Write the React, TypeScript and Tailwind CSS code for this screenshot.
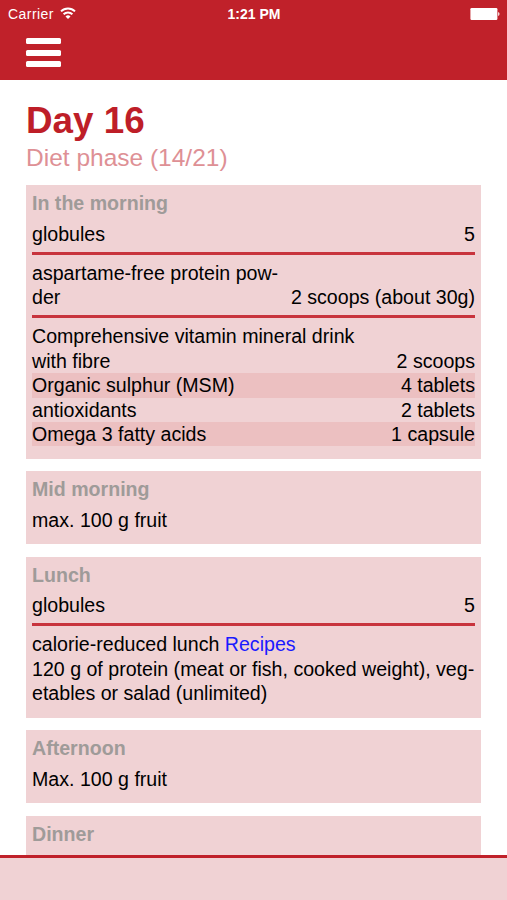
import type { ReactNode } from "react";

function Row({ name, amount, striped }: { name: string; amount: string; striped?: boolean }) {
  return (
    <div className={striped ? "flex justify-between bg-[#ecc0c1]" : "flex justify-between"}>
      <span>{name}</span>
      <span>{amount}</span>
    </div>
  );
}

function Divider() {
  return <div className="mt-[5.8px] mb-[6px] h-[3px] bg-[#c8343d]" />;
}

function Meal({ title, children }: { title: string; children?: ReactNode }) {
  return (
    <section className="bg-[#f0d2d4] px-[6px] pt-[6px] pb-[12.2px]">
      <h2 className="mb-[6.2px] font-bold text-[#9f9b99]">{title}</h2>
      {children}
    </section>
  );
}

function StatusBar() {
  return (
    <div className="grid h-7 grid-cols-3 items-center pr-[7px] pl-2 text-[14px] leading-7">
      <div className="flex items-center gap-[6.5px]">
        <span className="tracking-[0.45px]">Carrier</span>
        <svg className="-mt-[3px]" width="16" height="12" viewBox="0 0 16 12" fill="none" stroke="currentColor" strokeWidth="2">
          <path d="M1 4.4a10 10 0 0 1 14 0M3.6 7.2a6.3 6.3 0 0 1 8.8 0" />
          <path d="M8 12 5.5 9.4a3.6 3.6 0 0 1 5 0Z" fill="currentColor" stroke="none" />
        </svg>
      </div>
      <span className="text-center font-bold">1:21 PM</span>
      <svg className="-mt-[1px] justify-self-end" width="30" height="12" viewBox="0 0 30 12" fill="currentColor">
        <rect x="0.4" width="27" height="12" rx="1.2" />
        <path d="M28.2 4a2.2 2.2 0 0 1 0 4Z" />
      </svg>
    </div>
  );
}

export default function App() {
  return (
    <div className="flex h-[900px] flex-col overflow-hidden bg-white font-['Liberation_Sans',Arial,sans-serif] text-[19.6px] leading-[24.4px] text-black">
      <header className="h-20 shrink-0 bg-[#c0212a] text-white">
        <StatusBar />
        <button aria-label="Menu" className="mt-[10px] ml-[26px] flex w-[35px] flex-col gap-[5.6px]">
          <span className="h-[6px] w-full rounded-[1.5px] bg-white" />
          <span className="h-[6px] w-full rounded-[1.5px] bg-white" />
          <span className="h-[6px] w-full rounded-[1.5px] bg-white" />
        </button>
      </header>

      <main className="min-h-0 flex-1 overflow-hidden px-[26px] pt-[20px]">
        <h1 className="text-[36.8px] leading-[42px] font-bold text-[#be1e28]">Day 16</h1>
        <p className="mb-[13px] pt-[1px] text-[24.5px] leading-[29px] text-[#de9095]">Diet phase (14/21)</p>

        <div className="flex flex-col gap-[12.4px]">
          <Meal title="In the morning">
            <Row name="globules" amount="5" />
            <Divider />
            <div>aspartame-free protein pow-</div>
            <Row name="der" amount="2 scoops (about 30g)" />
            <Divider />
            <div>Comprehensive vitamin mineral drink</div>
            <Row name="with fibre" amount="2 scoops" />
            <Row name="Organic sulphur (MSM)" amount="4 tablets" striped />
            <Row name="antioxidants" amount="2 tablets" />
            <Row name="Omega 3 fatty acids" amount="1 capsule" striped />
          </Meal>
          <Meal title="Mid morning">max. 100 g fruit</Meal>
          <Meal title="Lunch">
            <Row name="globules" amount="5" />
            <Divider />
            <p className="whitespace-nowrap">
              calorie-reduced lunch <a className="text-[#1a1aff]">Recipes</a>
              <br />
              120 g of protein (meat or fish, cooked weight), veg-
              <br />
              etables or salad (unlimited)
            </p>
          </Meal>
          <Meal title="Afternoon">Max. 100 g fruit</Meal>
          <Meal title="Dinner" />
        </div>
      </main>

      <footer className="h-[45px] shrink-0 border-t-[3px] border-[#c0212a] bg-[#f0d2d4]" />
    </div>
  );
}
